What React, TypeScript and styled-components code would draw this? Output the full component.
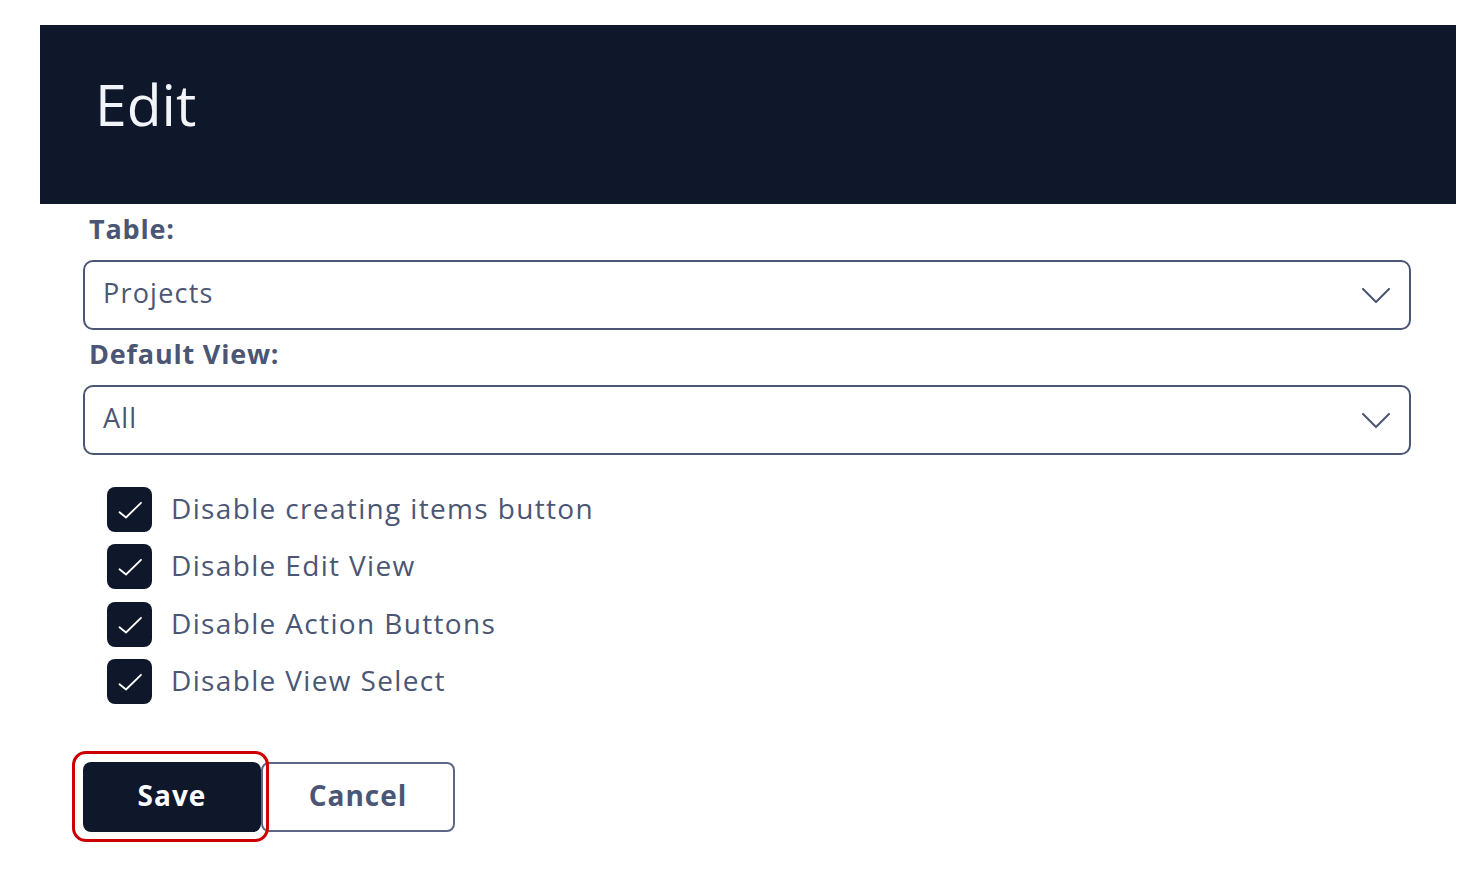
import React from "react";
import styled, { createGlobalStyle } from "styled-components";

const GlobalStyle = createGlobalStyle`
  html, body { margin: 0; padding: 0; background: #ffffff; }
  body { font-family: "Open Sans", "Noto Sans", sans-serif; }
  * { box-sizing: border-box; }
`;

const Page = styled.div`
  padding: 25px 26px 40px 40px;
`;

const Header = styled.header`
  height: 179px;
  background: #0f172a;
  display: flex;
  align-items: center;
  padding: 0 0 22px 55px;
`;

const Title = styled.h1`
  margin: 0;
  font-size: 57px;
  line-height: 60px;
  font-weight: 400;
  color: #f1f5f9;
`;

const Form = styled.div`
  padding: 7px 45px 0 43px;
  display: flex;
  flex-direction: column;
`;

const Label = styled.div`
  font-size: 27px;
  line-height: 36px;
  font-weight: 700;
  letter-spacing: 0.8px;
  color: #4b5675;
  padding-left: 6px;
  margin-bottom: 13px;
`;

const Select = styled.div`
  height: 70px;
  border: 2px solid #4b5675;
  border-radius: 10px;
  display: flex;
  align-items: center;
  justify-content: space-between;
  padding: 0 19px 5px 18px;
  font-size: 27px;
  letter-spacing: 1.2px;
  color: #4b5675;
  margin-bottom: 6px;
`;

const ChevronWrap = styled.span`
  display: flex;
  padding-top: 5px;
`;

const Chevron = () => (
  <ChevronWrap>
    <svg width="28" height="15" viewBox="0 0 28 15" fill="none">
      <polyline points="1,1 14,14 27,1" stroke="#4b5675" strokeWidth="2" strokeLinejoin="round" strokeLinecap="round" />
    </svg>
  </ChevronWrap>
);

const CheckList = styled.div`
  margin-top: 26px;
  padding-left: 24px;
  display: flex;
  flex-direction: column;
  gap: 12.3px;
`;

const CheckRow = styled.label`
  display: flex;
  align-items: center;
  gap: 19px;
  height: 45px;
`;

const CheckText = styled.span`
  font-size: 28px;
  letter-spacing: 1.35px;
  color: #4b5675;
  padding-bottom: 3px;
`;

const Box = styled.span`
  width: 45px;
  height: 45px;
  border-radius: 8px;
  background: #0f172a;
  display: flex;
  align-items: center;
  justify-content: center;
  flex-shrink: 0;
`;

const Check = () => (
  <Box>
    <svg width="45" height="45" viewBox="0 0 45 45" fill="none">
      <polyline points="12.5,25.3 19,30.5 34,15.8" stroke="#ffffff" strokeWidth="1.8" strokeLinejoin="round" strokeLinecap="round" />
    </svg>
  </Box>
);

const ButtonRow = styled.div`
  margin-top: 58px;
  display: flex;
  align-items: center;
`;

const SaveWrap = styled.div`
  position: relative;
  display: flex;
`;

const Ring = styled.span`
  position: absolute;
  z-index: 2;
  left: -11px;
  right: -8px;
  top: -11px;
  bottom: -10px;
  border: 3px solid #cc0000;
  border-radius: 14px;
  pointer-events: none;
`;

const Button = styled.button<{ $primary?: boolean; $w: number }>`
  width: ${(p) => p.$w}px;
  height: 70px;
  border-radius: 8px;
  font-family: "Open Sans", "Noto Sans", sans-serif;
  font-size: 28px;
  font-weight: 700;
  letter-spacing: 1px;
  cursor: pointer;
  background: ${(p) => (p.$primary ? "#0f172a" : "#ffffff")};
  color: ${(p) => (p.$primary ? "#ffffff" : "#4b5675")};
  border: ${(p) => (p.$primary ? "none" : "2px solid #5b6785")};
  padding: 0 0 3px;
`;

const options = [
  "Disable creating items button",
  "Disable Edit View",
  "Disable Action Buttons",
  "Disable View Select",
];

export default function App() {
  return (
    <>
      <GlobalStyle />
      <Page>
        <Header>
          <Title>Edit</Title>
        </Header>
        <Form>
          <Label>Table:</Label>
          <Select>
            <span>Projects</span>
            <Chevron />
          </Select>
          <Label>Default View:</Label>
          <Select>
            <span>All</span>
            <Chevron />
          </Select>
          <CheckList>
            {options.map((o) => (
              <CheckRow key={o}>
                <Check />
                <CheckText>{o}</CheckText>
              </CheckRow>
            ))}
          </CheckList>
          <ButtonRow>
            <SaveWrap>
              <Button $primary $w={178}>Save</Button>
              <Ring />
            </SaveWrap>
            <Button $w={194}>Cancel</Button>
          </ButtonRow>
        </Form>
      </Page>
    </>
  );
}
